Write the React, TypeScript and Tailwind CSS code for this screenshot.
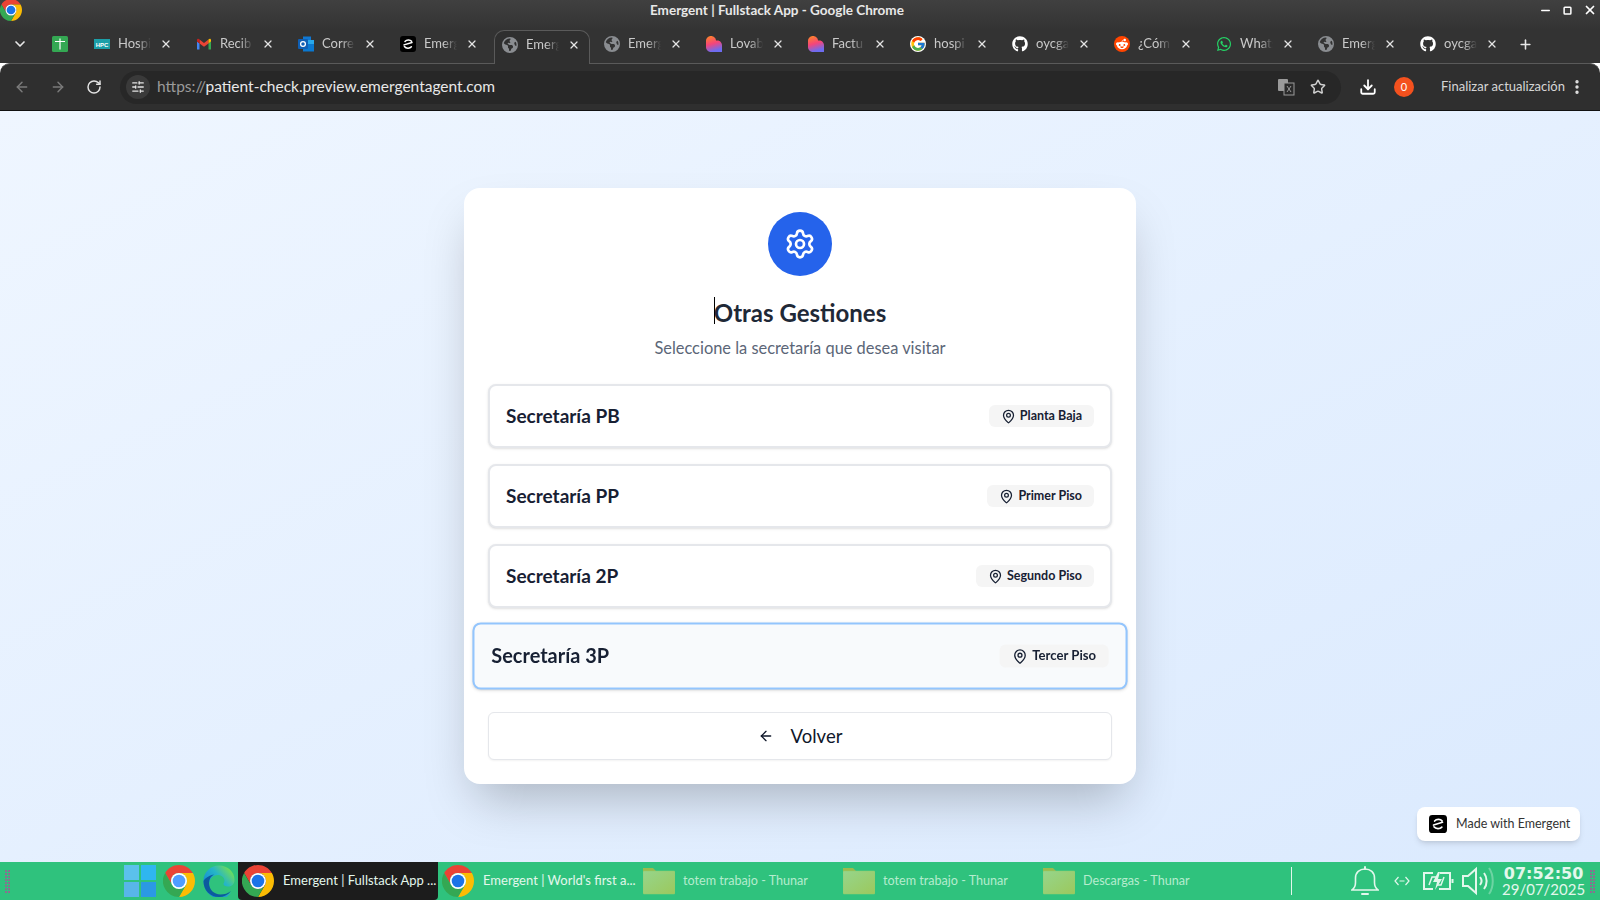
import type { ReactNode } from "react";
import { ArrowLeft, ArrowRight, Download, MapPin, Plus, RotateCw, Settings, SlidersHorizontal, Star, X, Minus, EllipsisVertical, Square, ChevronDown } from "lucide-react";
import { FaGithub, FaWhatsapp, FaEarthAmericas, FaRedditAlien } from "react-icons/fa6";
import { FcGoogle } from "react-icons/fc";

const ChromeLogo = ({ className = "w-4 h-4", inner = "#1a73e8" }: { className?: string; inner?: string }) => (
  <svg viewBox="0 0 48 48" className={className}>
    <path fill="#ea4335" d="M24 0C15.1 0 7.4 4.8 3.2 12l10.4 18A12 12 0 0 1 24 12h20.8C40.6 4.8 32.9 0 24 0z" />
    <path fill="#fbbc04" d="M44.8 12H24a12 12 0 0 1 10.4 18L24 48c13.3 0 24-10.7 24-24 0-4.4-1.2-8.5-3.2-12z" />
    <path fill="#34a853" d="M3.2 12A24 24 0 0 0 24 48l10.4-18a12 12 0 0 1-20.8 0z" />
    <circle cx="24" cy="24" r="12" fill="#fff" />
    <circle cx="24" cy="24" r="9.5" fill={inner} />
  </svg>
);

const EmergentLogo = ({ className = "w-4 h-4" }: { className?: string }) => (
  <svg viewBox="0 0 16 16" className={className}>
    <rect width="16" height="16" rx="3" fill="#000" />
    <path d="M4 8.900l8-2.400M11.600 5.200C10.200 3.500 6.600 3.500 5 5.400M4.400 10.500c1.600 2.100 5.400 2.200 7 .3" stroke="#fff" strokeWidth="1.500" fill="none" strokeLinecap="round" />
  </svg>
);

const SheetIcon = () => (
  <svg viewBox="0 0 16 16" className="w-4 h-4">
    <rect width="16" height="16" rx="1.500" fill="#34a853" />
    <path d="M3 5.500h10M8 2.500v11" stroke="#fff" strokeWidth="1.200" />
  </svg>
);

const HpcIcon = () => (
  <svg viewBox="0 0 16 16" className="w-4 h-4">
    <rect y="3" width="16" height="10" fill="#1c9fa8" />
    <text x="8" y="10.500" textAnchor="middle" fontSize="6" fontWeight="700" fill="#fff" fontFamily="Liberation Sans, sans-serif">HPC</text>
  </svg>
);

const GmailIcon = () => (
  <svg viewBox="0 0 16 16" className="w-4 h-4">
    <path fill="#4285f4" d="M1 13.500h2.500V7.400L1 5.500z" />
    <path fill="#34a853" d="M12.500 13.500H15V5.500l-2.500 1.900z" />
    <path fill="#ea4335" d="M3.500 7.400V3.600L8 7l4.500-3.400v3.800L8 10.800z" />
    <path fill="#fbbc04" d="M12.500 3.600v3.800L15 5.500V4c0-1.300-1.500-2-2.500-.4z" />
    <path fill="#c5221f" d="M1 5.500l2.500 1.900V3.600C2.500 2 1 2.700 1 4z" />
  </svg>
);

const OutlookIcon = () => (
  <svg viewBox="0 0 16 16" className="w-4 h-4">
    <rect x="5" y="0.500" width="8" height="7.500" fill="#0f78d4" />
    <rect x="9" y="4" width="7" height="6" fill="#28a8ea" />
    <rect x="5" y="8" width="11" height="7.500" fill="#0a78d0" />
    <rect y="3" width="10" height="10" rx="1" fill="#0f5fb4" />
    <circle cx="5" cy="8" r="2.400" fill="none" stroke="#fff" strokeWidth="1.300" />
  </svg>
);

const HeartIcon = ({ id }: { id: string }) => (
  <svg viewBox="0 0 16 16" className="w-4 h-4">
    <defs>
      <linearGradient id={id} x1="0" y1="0" x2="0.3" y2="1">
        <stop offset="0" stopColor="#ff8a1f" />
        <stop offset="0.55" stopColor="#f5457a" />
        <stop offset="1" stopColor="#6d6cf0" />
      </linearGradient>
    </defs>
    <path fill={`url(#${id})`} d="M5 0c2.700 0 5 2.200 5 4.600h1.500C14 4.600 16 6.800 16 9.400V16H5c-2.800 0-5-2.300-5-5V5c0-2.800 2.200-5 5-5z" />
  </svg>
);

const RedditIcon = () => (
  <span className="w-4 h-4 rounded-full bg-[#ff4500] flex items-center justify-center text-white">
    <FaRedditAlien className="w-3 h-3" />
  </span>
);

const globe = <FaEarthAmericas className="w-4 h-4 text-[#8a8d91]" />;
const github = <FaGithub className="w-4 h-4 text-white" />;

const tabs: { icon: ReactNode; label: string; active?: boolean }[] = [
  { icon: <HpcIcon />, label: "Hospi" },
  { icon: <GmailIcon />, label: "Recib" },
  { icon: <OutlookIcon />, label: "Corre" },
  { icon: <EmergentLogo />, label: "Emerg" },
  { icon: globe, label: "Emerg", active: true },
  { icon: globe, label: "Emerg" },
  { icon: <HeartIcon id="lovable1" />, label: "Lovab" },
  { icon: <HeartIcon id="lovable2" />, label: "Factu" },
  { icon: <FcGoogle className="w-4 h-4 bg-white rounded-full" />, label: "hospi" },
  { icon: github, label: "oycga" },
  { icon: <RedditIcon />, label: "¿Cóm" },
  { icon: <FaWhatsapp className="w-4 h-4 text-[#25d366]" />, label: "Whats" },
  { icon: globe, label: "Emerg" },
  { icon: github, label: "oycga" },
];

const secretarias = [
  { name: "Secretaría PB", floor: "Planta Baja" },
  { name: "Secretaría PP", floor: "Primer Piso" },
  { name: "Secretaría 2P", floor: "Segundo Piso" },
  { name: "Secretaría 3P", floor: "Tercer Piso", hover: true },
];

const Folder = ({ id }: { id: string }) => (
  <svg viewBox="0 0 32 28" className="w-8 h-7 shrink-0">
    <path fill="#9bbb4d" d="M0 1h10l3 3h2v6H0z" />
    <defs>
      <linearGradient id={id} x1="0" y1="0" x2="1" y2="1">
        <stop offset="0" stopColor="#96d58c" />
        <stop offset="1" stopColor="#9cc85c" />
      </linearGradient>
    </defs>
    <rect x="0" y="4" width="32" height="23" rx="1" fill={`url(#${id})`} stroke="#8fcf6f" strokeWidth="0.500" />
  </svg>
);

const Grip = () => (
  <div className="grid grid-cols-2 gap-px">
    {Array.from({ length: 16 }).map((_, i) => (
      <span key={i} className="w-0.5 h-0.5 bg-[#8a6f8f]" />
    ))}
  </div>
);

const EdgeLogo = () => (
  <svg viewBox="0 0 32 32" className="w-8 h-8 shrink-0 ml-2">
    <defs>
      <linearGradient id="edgeTop" x1="0.85" y1="0.1" x2="0.1" y2="0.8">
        <stop offset="0" stopColor="#6fdc5a" />
        <stop offset="0.4" stopColor="#25b5c8" />
        <stop offset="1" stopColor="#1281d8" />
      </linearGradient>
    </defs>
    <path fill="url(#edgeTop)" d="M0.500 16C0.500 7 7.500 0.500 16 0.500c9 0 15.500 6.500 15.500 14.500 0 4-2.500 6.500-6.500 6.500-3 0-4.500-1-4.500-2.500 0-1 1-1.500 1-3.500 0-3-3-5.500-6.500-5.500-5 0-9 4-9 9.500 0 6.500 5 11.500 11.500 11.500 4 0 7.500-1 10.500-3.500-3 4.500-7.500 6.500-12 6.500C7 32 0.500 25 0.500 16z" />
    <path fill="#0c5a9e" d="M28 26c-3 2.500-6.500 3.500-10.500 3.500-6.500 0-11.500-5-11.500-11.500 0-4 2-7 5-8.500-6 1-10.500 5-10.500 7C0.500 25 7 32 16 32c4.500 0 9-2 12-6z" />
  </svg>
);

export default function App() {
  return (
    <div className="h-screen w-full flex flex-col overflow-hidden font-['Lato','Noto_Sans',sans-serif]">
      {/* window title */}
      <div className="h-[30px] pb-[10px] bg-gradient-to-b from-[#404040] to-[#333333] flex items-center shrink-0 text-[#e8e8e8]">
        <ChromeLogo className="w-[22px] h-[22px] shrink-0" />
        <span className="ml-[628px] text-[13.500px] font-bold whitespace-nowrap">Emergent | Fullstack App - Google Chrome</span>
        <div className="ml-auto flex items-center gap-[11px] pr-[3px] text-white">
          <Minus className="w-[13px] h-[13px]" strokeWidth={2.5} />
          <Square className="w-[9px] h-[9px]" strokeWidth={4} />
          <X className="w-[14px] h-[14px]" strokeWidth={3} />
        </div>
      </div>

      {/* tab strip */}
      <div className="h-[33px] bg-[#333333] flex items-center shrink-0 relative z-10 pb-[5px]">
        <div className="w-[40px] flex justify-center text-[#e8e8e8]">
          <ChevronDown className="w-4 h-4" strokeWidth={2.5} />
        </div>
        <div className="w-[40px] flex justify-center">
          <SheetIcon />
        </div>
        <div className="w-1" />
        {tabs.map((tab, i) =>
          tab.active ? (
            <div
              key={i}
              className="ml-[2px] mr-[4px] w-[96px] h-[34px] self-start flex items-center pl-[7px] pb-[5px] rounded-t-[10px] border border-b-0 border-[#5a5a5a] bg-[#2f2f2f]"
            >
              <span className="w-4 h-4 shrink-0 flex items-center justify-center">{tab.icon}</span>
              <span className="ml-2 w-[33px] overflow-hidden whitespace-nowrap text-[13px] text-[#c9c9c9] [mask-image:linear-gradient(to_right,black_60%,transparent)]">
                {tab.label}
              </span>
              <X className="ml-[9px] w-3 h-3 text-[#e4e4e4] shrink-0" strokeWidth={2.5} />
            </div>
          ) : (
            <div key={i} className="w-[102px] h-7 flex items-center pl-[10px]">
              <span className="w-4 h-4 shrink-0 flex items-center justify-center">{tab.icon}</span>
              <span className="ml-2 w-[33px] overflow-hidden whitespace-nowrap text-[13px] text-[#c9c9c9] [mask-image:linear-gradient(to_right,black_60%,transparent)]">
                {tab.label}
              </span>
              <X className="ml-[9px] w-3 h-3 text-[#e4e4e4] shrink-0" strokeWidth={2.5} />
            </div>
          )
        )}
        <Plus className="ml-[6px] w-[15px] h-[15px] text-[#e8e8e8]" strokeWidth={2.5} />
      </div>

      {/* toolbar */}
      <div className="h-[48px] bg-[#2f2f2f] border-t border-b border-t-[#5a5a5a] border-b-[#111111] rounded-t-[10px] flex items-center shrink-0 text-[#e4e4e4]">
        <ArrowLeft className="ml-[14px] w-4 h-4 text-[#7b7b7b]" strokeWidth={2.2} />
        <ArrowRight className="ml-[20px] w-4 h-4 text-[#7b7b7b]" strokeWidth={2.2} />
        <RotateCw className="ml-[20px] w-4 h-4" strokeWidth={2.2} />
        <div className="ml-[18px] w-[1221px] h-[33px] rounded-full bg-[#272727] flex items-center pl-[6px] pr-[15px]">
          <span className="w-6 h-6 rounded-full bg-[#3a3a3a] flex items-center justify-center">
            <SlidersHorizontal className="w-[14px] h-[14px]" strokeWidth={2.2} />
          </span>
          <span className="ml-[7px] text-[15.500px] text-[#e8e8e8] whitespace-nowrap">
            <span className="text-[#9a9a9a]">https://</span>patient-check.preview.emergentagent.com
          </span>
          <svg viewBox="0 0 18 18" className="ml-auto w-[18px] h-[18px]">
            <rect x="1" y="1" width="10" height="12" rx="1" fill="#9a9a9a" />
            <rect x="7" y="5" width="10" height="12" fill="#2a2a2a" stroke="#9a9a9a" />
            <path d="M10 8l4 6M14 8l-4 6" stroke="#9a9a9a" />
          </svg>
          <Star className="ml-[15px] w-4 h-4 text-[#d0d0d0]" strokeWidth={2.2} />
        </div>
        <Download className="ml-[18px] w-[18px] h-[18px] text-white" strokeWidth={2.4} />
        <span className="ml-[17px] w-5 h-5 rounded-full bg-[#f4511e] flex items-center justify-center text-[11px] text-white">0</span>
        <span className="ml-[27px] text-[13px] text-[#d6d6d6] whitespace-nowrap">Finalizar actualización</span>
        <EllipsisVertical className="ml-[3px] w-[18px] h-[18px]" strokeWidth={2.5} />
      </div>

      {/* page */}
      <div className="flex-1 relative bg-gradient-to-br from-[#eff6ff] to-[#dbeafe] flex justify-center items-center">
        <div className="w-[672px] bg-white rounded-2xl shadow-2xl p-6 -mt-px">
          <div className="w-16 h-16 rounded-full bg-[#2563eb] flex items-center justify-center mx-auto">
            <Settings className="w-8 h-8 text-white" />
          </div>
          <h2 className="mt-[21px] text-center text-2xl leading-8 font-bold text-[#1f2937]">
            <span className="relative">
              <span className="absolute left-0 -top-px w-px h-[27px] bg-black" />
              Otras Gestiones
            </span>
          </h2>
          <p className="mt-[7px] mb-6 text-center text-[16.400px] leading-6 text-[#5b6677]">Seleccione la secretaría que desea visitar</p>
          <div className="flex flex-col gap-4">
            {secretarias.map((s) => (
              <button
                key={s.name}
                className={
                  s.hover
                    ? "h-16 px-4 flex items-center justify-between rounded-lg border-2 border-[#93c5fd] bg-[#f8fafc] shadow-sm scale-105"
                    : "h-16 px-4 flex items-center justify-between rounded-lg border-2 border-[#e5e7eb] bg-white shadow-sm"
                }
              >
                <span className="text-[19px] font-bold text-[#172033]">{s.name}</span>
                <span className="h-[22px] px-3 flex items-center gap-1 rounded-md bg-[#f5f5f5] text-[12.500px] font-bold text-[#172033]">
                  <MapPin className="w-[15px] h-[15px]" />
                  {s.floor}
                </span>
              </button>
            ))}
          </div>
          <button className="mt-6 w-full h-12 flex items-center justify-center gap-[17px] rounded-md border border-[#e5e7eb] bg-white shadow-xs text-[18.500px] text-[#0f172a]">
            <ArrowLeft className="w-4 h-4" />
            <span className="pt-px">Volver</span>
          </button>
        </div>

        <div className="absolute right-5 bottom-[21px] w-[163px] h-[34px] rounded-lg bg-white shadow-md flex items-center pl-3 gap-[9px]">
          <EmergentLogo className="w-[18px] h-[18px]" />
          <span className="text-[12.500px] text-[#333333] whitespace-nowrap">Made with Emergent</span>
        </div>
      </div>

      {/* desktop panel */}
      <div className="h-[38px] bg-[#2fc27d] flex items-center shrink-0 text-[#e3f7ec]">
        <div className="ml-[5px]"><Grip /></div>
        <div className="ml-[114px] grid grid-cols-2 gap-[2px] w-8 h-8 shrink-0">
          <span className="bg-[#5bc1ec]" />
          <span className="bg-[#2fb6f0]" />
          <span className="bg-[#58b6e8]" />
          <span className="bg-[#2b99e4]" />
        </div>
        <ChromeLogo className="ml-[7px] w-8 h-8 shrink-0" inner="#4f9dff" />
        <EdgeLogo />
        <div className="ml-[3px] w-[200px] h-[38px] bg-[#1c1c1c] rounded-b flex items-center pl-1">
          <ChromeLogo className="w-8 h-8 shrink-0" />
          <span className="ml-[9px] text-[13px] whitespace-nowrap">Emergent | Fullstack App ...</span>
        </div>
        <div className="w-[205px] flex items-center pl-1">
          <ChromeLogo className="w-8 h-8 shrink-0" />
          <span className="ml-[9px] text-[13px] whitespace-nowrap">Emergent | World's first a...</span>
        </div>
        {["totem trabajo - Thunar", "totem trabajo - Thunar", "Descargas - Thunar"].map((t, i) => (
          <div key={i} className="w-[200px] flex items-center">
            <Folder id={`folder${i}`} />
            <span className="ml-[8px] text-[12.600px] text-[#b5ecce] whitespace-nowrap">{t}</span>
          </div>
        ))}
        <span className="ml-[48px] w-px h-7 bg-[#e3f7ec]" />
        <svg viewBox="0 0 28 30" className="ml-[59px] w-7 h-[30px] shrink-0" fill="none" stroke="currentColor" strokeWidth="1.600" strokeLinecap="round">
          <path d="M1 24h26c-2-1.500-3.500-3-3.500-7.500V12c0-5.500-4-9-9.500-9S4.500 6.500 4.500 12v4.500C4.500 21 3 22.500 1 24z" />
          <path d="M14 1v2M11 28h6" strokeWidth="2" />
        </svg>
        <svg viewBox="0 0 16 10" className="ml-[15px] w-4 h-[10px] shrink-0" fill="none" stroke="currentColor" strokeWidth="1.200">
          <path d="M4.500 1L1 5l3.500 4M11.500 1L15 5l-3.500 4M5.500 5h5" />
        </svg>
        <svg viewBox="0 0 32 20" className="ml-[13px] w-8 h-5 shrink-0" fill="none" stroke="currentColor" strokeWidth="2">
          <path d="M10 2H1v16h9M17 2h10v16H16" />
          <path d="M29.500 8v4" />
          <path d="M6 14l3-8h4M21 6l-3 8h-4" strokeWidth="1.500" />
          <path d="M15 1l-5 10h4l-2 8 7-11h-4l2-7z" fill="currentColor" stroke="none" />
        </svg>
        <svg viewBox="0 0 32 30" className="ml-[7px] w-8 h-[30px] shrink-0" fill="none" stroke="currentColor" strokeWidth="2">
          <path d="M1 10h5l8-7v24l-8-7H1z" />
          <path d="M18 11c2 2.500 2 5.500 0 8M22 7c3.500 4.500 3.500 11.500 0 16" />
          <path d="M27 2c5 7 5 19 0 26" strokeOpacity="0.35" />
        </svg>
        <div className="ml-[8px] flex flex-col items-center leading-none font-['DejaVu_Sans',sans-serif]">
          <span className="text-[16px] font-bold">07:52:50</span>
          <span className="text-[15px] font-['Lato',sans-serif]">29/07/2025</span>
        </div>
        <div className="ml-[5px]"><Grip /></div>
      </div>
    </div>
  );
}
